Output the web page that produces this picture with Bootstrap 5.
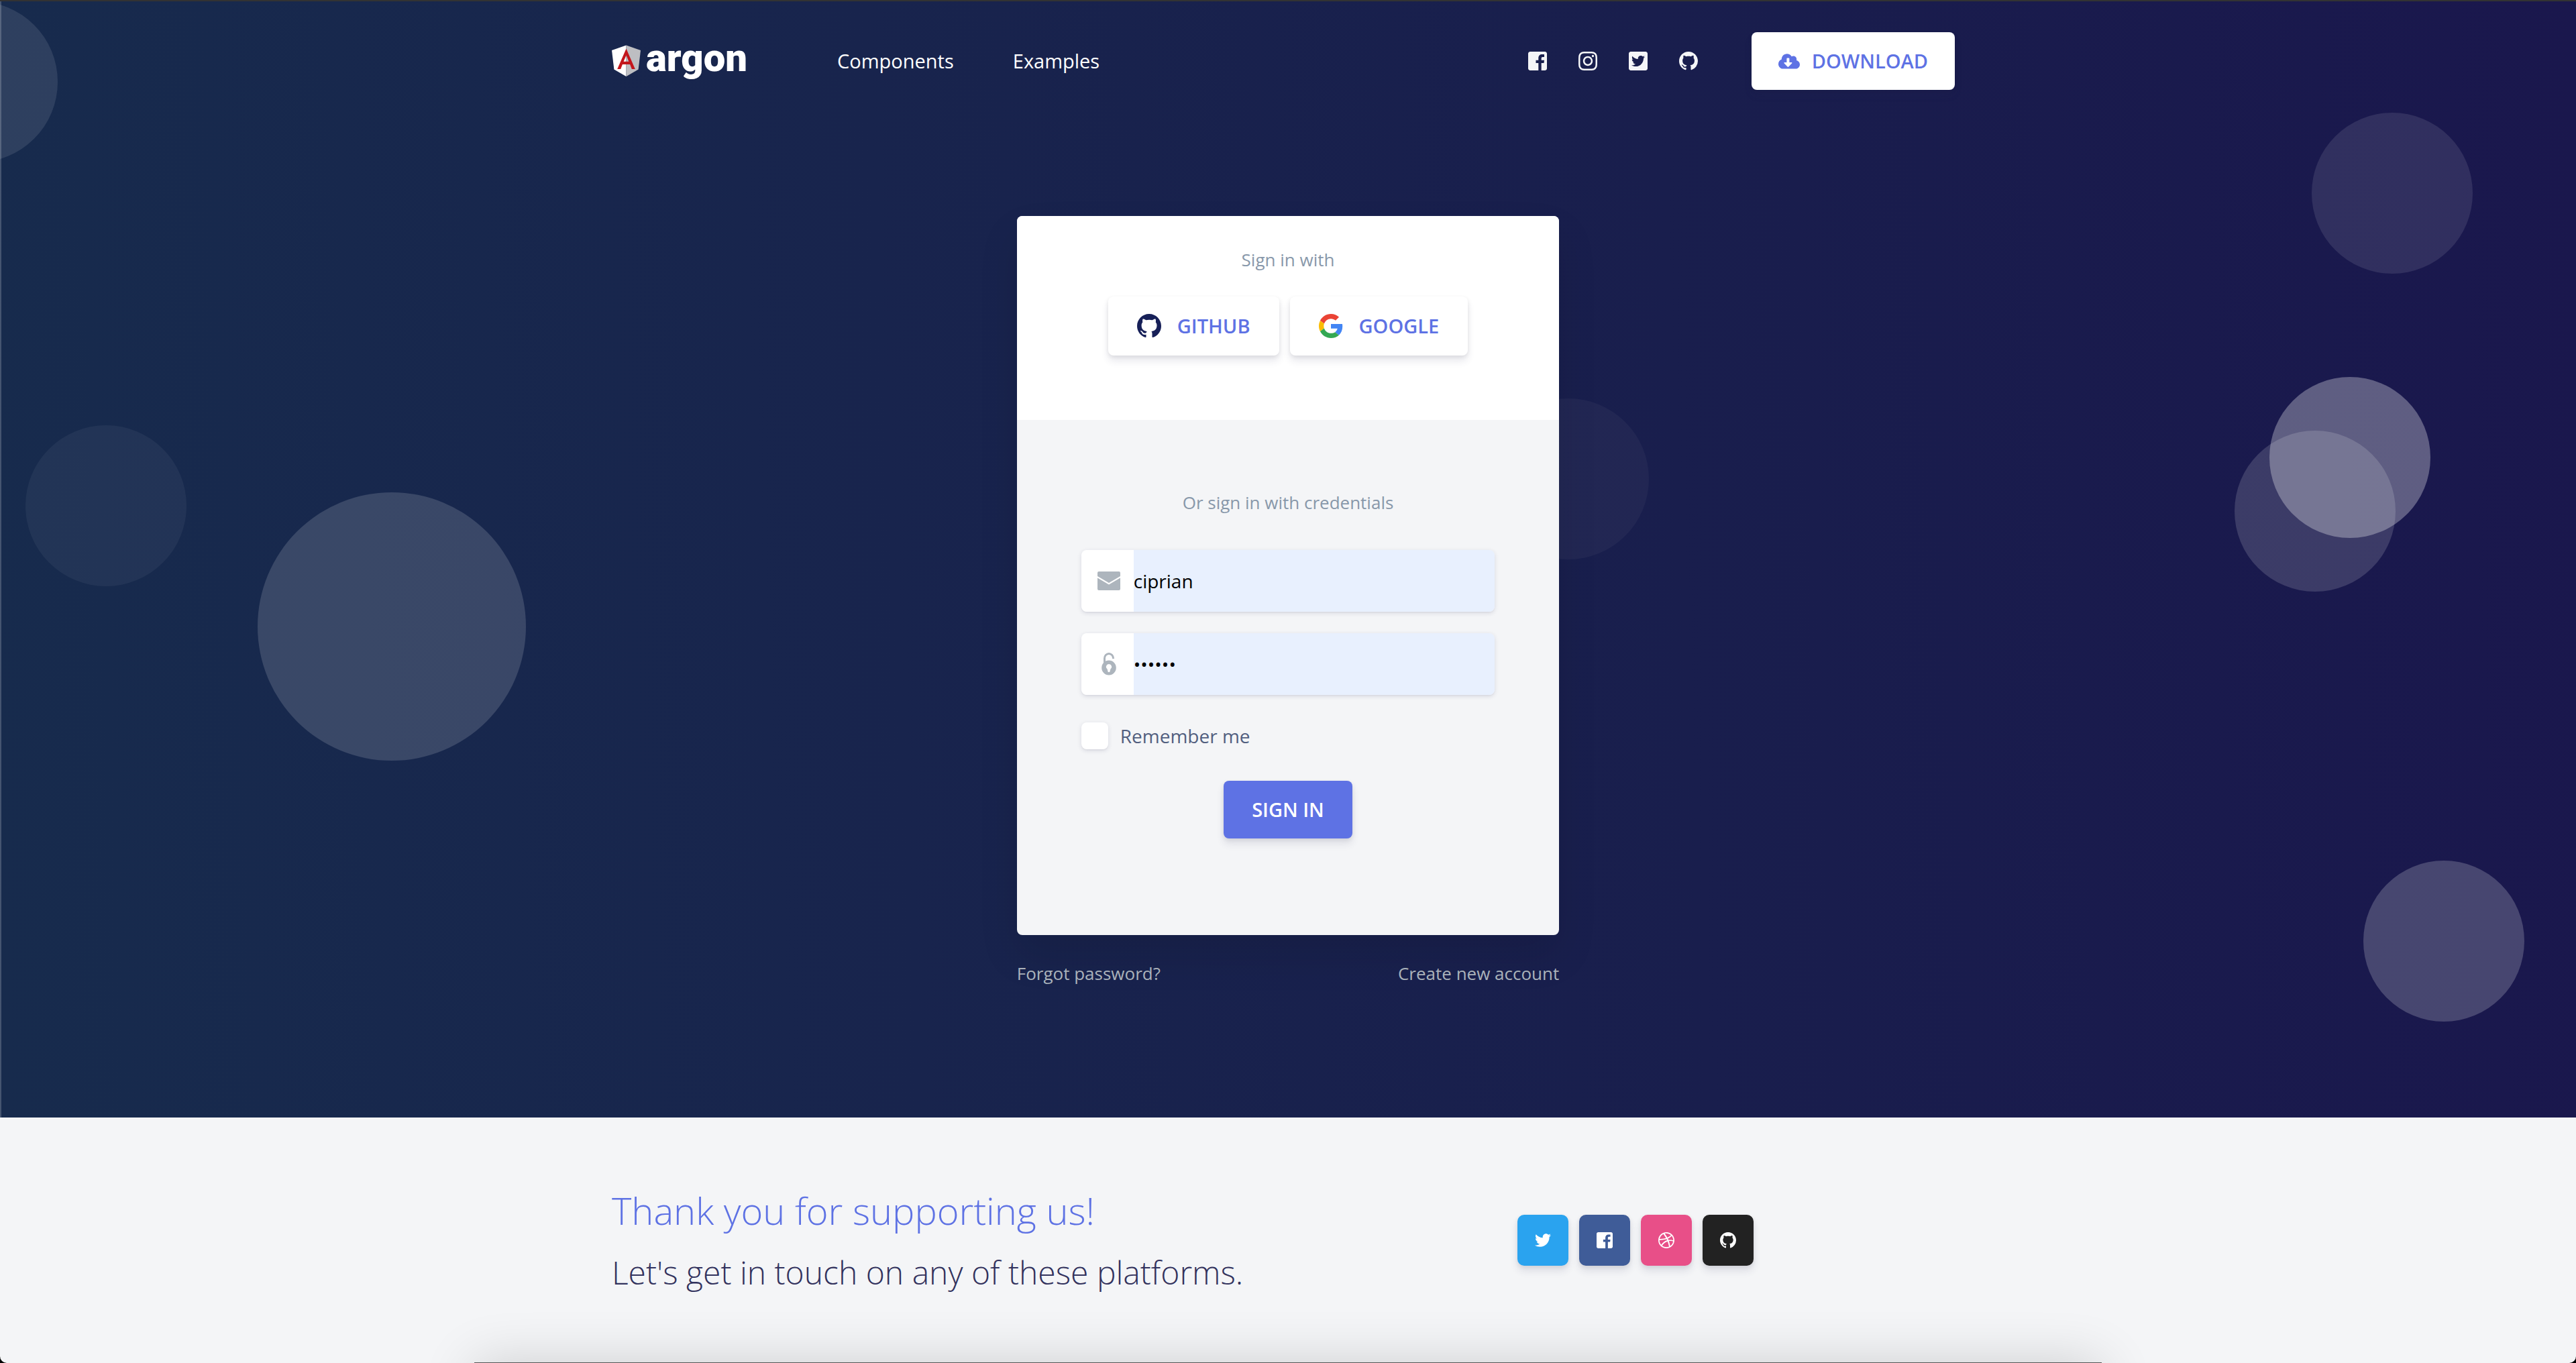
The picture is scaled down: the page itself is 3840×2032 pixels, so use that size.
<!DOCTYPE html>
<html lang="en">
<head>
<meta charset="utf-8">
<meta name="viewport" content="width=device-width, initial-scale=1">
<title>Argon – Sign in</title>
<link href="https://cdn.jsdelivr.net/npm/bootstrap@5.3.0/dist/css/bootstrap.min.css" rel="stylesheet">
<style>
  :root {
    --argon-primary: #5e72e4;
    --argon-muted: #8898aa;
    --argon-light: #f4f5f7;
    --btn-shadow: 0 8px 12px rgba(50, 50, 93, .11), 0 2px 6px rgba(0, 0, 0, .08);
    --field-shadow: 0 2px 6px rgba(50, 50, 93, .15), 0 2px 0 rgba(0, 0, 0, .02);
  }
  body { background: #000; font-family: "Open Sans", sans-serif; font-size: 28px; line-height: 42px; color: #525f7f; }
  svg { display: block; fill: currentColor; flex: none; }
  .page-shell { min-height: 100vh; background: var(--argon-light); border-top: 2px solid #333; border-radius: 0 0 10px 10px; }
  .container { --bs-gutter-x: 54px; max-width: 2070px; }
  .row { --bs-gutter-x: 54px; }

  .hero { background: linear-gradient(87deg, #172b4d 0, #1a174d 100%); box-shadow: inset 2px 0 rgba(255, 255, 255, .2); padding-bottom: 196px; }
  .bubble { position: absolute; width: 240px; height: 240px; border-radius: 50%; background: rgba(255, 255, 255, .1); }
  .bubble-1 { left: -4%; top: 0; }
  .bubble-2 { right: 4%; top: 10%; }
  .bubble-3 { right: 5.66%; top: 560px; background: rgba(255, 255, 255, .3); }
  .bubble-4 { right: 7%; top: 640px; background: rgba(255, 255, 255, .15); }
  .bubble-5 { left: 1%; top: 38%; background: rgba(255, 255, 255, .05); }
  .bubble-6 { left: 10%; top: 44%; width: 400px; height: 400px; background: rgba(255, 255, 255, .15); }
  .bubble-7 { right: 36%; top: 592px; background: rgba(255, 255, 255, .04); }
  .bubble-8 { right: 2%; top: 77%; background: rgba(255, 255, 255, .2); }

  .site-nav { padding: 46px 0 48px; }
  .site-nav .nav-link { font-size: 29px; padding: 0; color: #fff; }
  .site-nav .menu-links { gap: 88px; margin-left: 130px; }
  .social-links { gap: 47px; margin-right: 80px; color: var(--argon-light); }
  .social-links a { color: inherit; }
  .btn-argon { font-size: 29px; font-weight: 600; line-height: 42px; padding: 22px 42px; border: 0; border-radius: 8px; text-transform: uppercase; box-shadow: var(--btn-shadow); }
  .btn-white, .btn-white:hover { background: #fff; color: var(--argon-primary); }
  .btn-violet, .btn-violet:hover { background: var(--argon-primary); color: #fff; }
  .btn-fetch { gap: 18px; padding: 22px 40px; margin-right: 14px; }
  .btn-brand { gap: 24px; padding: 23px 43px; }

  .login-area { padding-top: 140px; }
  .login-card { background: var(--argon-light); border: 0; border-radius: 8px; box-shadow: 0 30px 60px rgba(0, 0, 0, .1); }
  .login-card .card-header { background: #fff; border: 0; border-radius: 8px 8px 0 0; padding: 46px 54px 96px; }
  .login-card .card-body { padding: 104px 96px 144px; }
  .brand-buttons { margin-top: 36px; }
  .caption { font-size: 26px; line-height: 38px; color: var(--argon-muted); }
  .field { border-radius: 8px; overflow: hidden; height: 92px; margin-top: 32px; box-shadow: var(--field-shadow); }
  .caption + .field { margin-top: 52px; }
  .field .input-group-text { width: 79px; background: #fff; border: 0; color: #adb5bd; padding: 0 0 0 24px; }
  .field .form-control { font-size: 28px; color: #000; background: #e8f0fe; border: 0; padding: 0; }
  .remember { gap: 18px; margin: 40px 0 46px; }
  .remember .form-check-input { width: 40px; height: 40px; margin: 0; border: 0; border-radius: 8px; background-color: #fff; box-shadow: var(--field-shadow); }
  .under-links { margin-top: 38px; font-size: 26px; line-height: 38px; }
  .under-links a { color: #adb5bd; }

  .site-footer { padding: 102px 0 98px; }
  .site-footer h2 { font-size: 56px; font-weight: 300; line-height: 73px; color: var(--argon-primary); margin-bottom: 20px; }
  .site-footer h3 { font-size: 48px; font-weight: 300; line-height: 72px; color: #32325d; }
  .btn-social { width: 76px; height: 76px; border: 0; border-radius: 10px; color: #fff; box-shadow: var(--btn-shadow); }
  .btn-social:hover { color: #fff; }
  .bg-twitter { background: #2aa3ef !important; }
  .bg-facebook { background: #3f5c98 !important; }
  .bg-dribbble { background: #e84f88 !important; }
  .bg-github { background: #222 !important; }
  /* panel that peeks in from below the window edge */
  .bottom-panel { position: absolute; left: 18.4%; right: 18.4%; bottom: -160px; height: 161px; background: #555; box-shadow: 0 0 80px rgba(0, 0, 0, .16); }
</style>
</head>
<body>
<div class="page-shell position-relative overflow-hidden">
  <main class="hero position-relative overflow-hidden">
    <div aria-hidden="true">
      <span class="bubble bubble-1"></span><span class="bubble bubble-2"></span>
      <span class="bubble bubble-3"></span><span class="bubble bubble-4"></span>
      <span class="bubble bubble-5"></span><span class="bubble bubble-6"></span>
      <span class="bubble bubble-7"></span><span class="bubble bubble-8"></span>
    </div>

    <nav class="site-nav position-relative">
      <div class="container d-flex align-items-center">
        <a class="d-block text-white" href="#" aria-label="Argon">
          <svg width="206" height="60" viewBox="0 0 206 60">
            <path fill="#fff" d="M21.500 6.500L0 14l3.400 28.500L21.500 53z"/>
            <path fill="#bdbec2" d="M21.500 6.500L43 14l-3.400 28.500L21.500 53z"/>
            <path fill="#c3161c" fill-rule="evenodd" d="M21.500 11.500L8.200 42h5l2.700-7h11.200l2.700 7h5zM21.500 21.500l3.900 9.300h-7.800z"/>
            <text x="51" y="45" font-family="Roboto, sans-serif" font-weight="900" font-size="58">argon</text>
          </svg>
        </a>
        <div class="menu-links d-flex">
          <a class="nav-link" href="#">Components</a>
          <a class="nav-link" href="#">Examples</a>
        </div>
        <div class="social-links d-flex ms-auto">
          <a href="#" aria-label="Facebook"><svg width="28" height="28" viewBox="0 32 448 448"><use href="#i-facebook"/></svg></a>
          <a href="#" aria-label="Instagram"><svg width="28" height="28" viewBox="0 32 448 448"><path d="M224.100 141c-63.600 0-114.900 51.300-114.900 114.900s51.300 114.900 114.900 114.900S339 319.500 339 255.900 287.700 141 224.100 141zm0 189.600c-41.100 0-74.700-33.500-74.700-74.700s33.500-74.700 74.700-74.700 74.700 33.500 74.700 74.700-33.600 74.700-74.700 74.700zm146.400-194.300c0 14.900-12 26.800-26.800 26.800-14.900 0-26.800-12-26.800-26.800s12-26.800 26.800-26.800 26.800 12 26.800 26.800zm76.100 27.200c-1.700-35.900-9.900-67.700-36.200-93.900-26.200-26.200-58-34.400-93.900-36.200-37-2.100-147.900-2.100-184.900 0-35.800 1.700-67.600 9.900-93.900 36.100s-34.400 58-36.200 93.900c-2.100 37-2.100 147.900 0 184.900 1.700 35.900 9.900 67.700 36.200 93.900s58 34.400 93.900 36.200c37 2.100 147.900 2.100 184.900 0 35.900-1.700 67.700-9.900 93.900-36.200 26.200-26.200 34.400-58 36.200-93.900 2.100-37 2.100-147.800 0-184.800zM398.800 388c-7.800 19.600-22.900 34.700-42.600 42.600-29.500 11.700-99.500 9-132.100 9s-102.700 2.600-132.100-9c-19.600-7.800-34.700-22.900-42.600-42.600-11.700-29.500-9-99.500-9-132.100s-2.600-102.700 9-132.100c7.800-19.600 22.900-34.700 42.600-42.600 29.500-11.700 99.500-9 132.100-9s102.700-2.600 132.100 9c19.600 7.800 34.700 22.900 42.600 42.600 11.700 29.500 9 99.500 9 132.100s2.700 102.700-9 132.100z"/></svg></a>
          <a href="#" aria-label="Twitter"><svg width="28" height="28" viewBox="0 32 448 448"><path d="M400 32H48C21.500 32 0 53.500 0 80v352c0 26.500 21.500 48 48 48h352c26.500 0 48-21.500 48-48V80c0-26.500-21.500-48-48-48zm-48.900 158.800c.2 2.800.2 5.700.2 8.500 0 86.700-66 186.600-186.600 186.600-37.200 0-71.700-10.800-100.700-29.400 5.300.6 10.400.8 15.800.8 30.700 0 58.900-10.400 81.400-28-28.800-.6-53-19.500-61.300-45.500 10.100 1.500 19.200 1.500 29.600-1.200-30-6.100-52.500-32.500-52.500-64.400v-.8c8.700 4.900 18.900 7.900 29.600 8.300a65.447 65.447 0 0 1-29.200-54.600c0-12.200 3.200-23.400 8.900-33.100 32.300 39.800 80.800 65.800 135.200 68.600-9.300-44.500 24-80.600 64-80.600 18.900 0 35.900 7.900 47.900 20.700 14.800-2.800 29-8.300 41.600-15.800-4.900 15.200-15.200 28-28.800 36.100 13.200-1.400 26-5.100 37.800-10.200-8.900 13.100-20.100 24.700-32.900 34z"/></svg></a>
          <a href="#" aria-label="GitHub"><svg width="28" height="28" viewBox="0 0 16 16"><use href="#i-github"/></svg></a>
        </div>
        <a class="btn btn-argon btn-white btn-fetch d-flex align-items-center" href="#">
          <svg width="32" height="24" viewBox="0 8 640 480"><path d="M537.600 226.600c4.100-10.700 6.400-22.400 6.400-34.600 0-53-43-96-96-96-19.700 0-38.100 6-53.300 16.200C367 64.200 315.300 32 256 32c-88.400 0-160 71.600-160 160 0 2.700.1 5.400.2 8.100C40.200 219.800 0 273.200 0 336c0 79.500 64.500 144 144 144h368c70.700 0 128-57.300 128-128 0-61.900-44-113.600-102.400-125.400zm-132.900 88.700L299.300 420.700c-6.200 6.200-16.400 6.200-22.600 0L171.300 315.300c-10.100-10.100-2.900-27.300 11.300-27.300H248V176c0-8.800 7.200-16 16-16h48c8.800 0 16 7.200 16 16v112h65.400c14.200 0 21.400 17.200 11.300 27.300z"/></svg>
          <span>Download</span>
        </a>
      </div>
    </nav>

    <section class="login-area container position-relative">
      <div class="row justify-content-center">
        <div class="col-5">
          <div class="card login-card">
            <div class="card-header text-center">
              <div class="caption">Sign in with</div>
              <div class="brand-buttons d-flex justify-content-center gap-3">
                <button type="button" class="btn btn-argon btn-white btn-brand d-flex align-items-center">
                  <svg width="36" height="36" viewBox="0 0 16 16" color="#172058"><use href="#i-github"/></svg><span>Github</span>
                </button>
                <button type="button" class="btn btn-argon btn-white btn-brand d-flex align-items-center">
                  <svg width="36" height="36" viewBox="0 0 48 48">
                    <path fill="#ea4335" d="M24 9.500c3.540 0 6.710 1.220 9.210 3.600l6.850-6.850C35.900 2.380 30.470 0 24 0 14.620 0 6.510 5.380 2.560 13.220l7.980 6.190C12.430 13.720 17.740 9.500 24 9.500z"/>
                    <path fill="#4285f4" d="M46.980 24.550c0-1.570-.15-3.090-.38-4.550H24v9.020h12.940c-.58 2.960-2.260 5.480-4.780 7.180l7.730 6c4.510-4.180 7.090-10.360 7.090-17.650z"/>
                    <path fill="#fbbc05" d="M10.530 28.590c-.48-1.450-.76-2.990-.76-4.590s.27-3.140.76-4.590l-7.980-6.190C.92 16.460 0 20.120 0 24c0 3.880.92 7.540 2.560 10.780l7.970-6.190z"/>
                    <path fill="#34a853" d="M24 48c6.480 0 11.930-2.130 15.890-5.810l-7.730-6c-2.150 1.450-4.920 2.300-8.160 2.300-6.260 0-11.570-4.220-13.470-9.910l-7.980 6.190C6.510 42.620 14.620 48 24 48z"/>
                  </svg><span>Google</span>
                </button>
              </div>
            </div>
            <form class="card-body">
              <div class="caption text-center">Or sign in with credentials</div>
              <div class="field input-group flex-nowrap">
                <label class="input-group-text" for="user" aria-label="Email"><svg width="34" height="28" viewBox="0 0 34 28"><path d="M2 0h30q2 0 2 2v5L17 17 0 7V2q0-2 2-2zM0 9.500l17 10 17-10V26q0 2-2 2H2q-2 0-2-2z"/></svg></label>
                <input class="form-control" id="user" type="text" value="ciprian">
              </div>
              <div class="field input-group flex-nowrap">
                <label class="input-group-text" for="pass" aria-label="Password"><svg width="34" height="34" viewBox="0 0 34 34"><path fill-rule="evenodd" d="M17 11.500a10.800 11 0 1 1 0 22 10.800 11 0 0 1 0-22zM17 17a4 4 0 0 0-2.500 7.200l1.300 4.800h2.400l1.300-4.800A4 4 0 0 0 17 17z"/><path fill="none" stroke="currentColor" stroke-width="3" d="M10.500 15V8.500a6.500 7 0 0 1 13 0V9"/></svg></label>
                <input class="form-control" id="pass" type="password" value="argon1">
              </div>
              <div class="remember d-flex align-items-center">
                <input class="form-check-input" id="remember" type="checkbox">
                <label for="remember">Remember me</label>
              </div>
              <div class="d-flex justify-content-center">
                <button type="button" class="btn btn-argon btn-violet">Sign in</button>
              </div>
            </form>
          </div>
          <div class="under-links d-flex justify-content-between">
            <a class="text-decoration-none" href="#">Forgot password?</a>
            <a class="text-decoration-none" href="#">Create new account</a>
          </div>
        </div>
      </div>
    </section>
  </main>

  <footer class="site-footer">
    <div class="container">
      <div class="row align-items-center">
        <div class="col-6">
          <h2>Thank you for supporting us!</h2>
          <h3 class="mb-0">Let's get in touch on any of these platforms.</h3>
        </div>
        <div class="col-6 d-flex justify-content-center gap-3 mb-1">
          <button type="button" class="btn btn-social bg-twitter d-flex align-items-center justify-content-center p-0" aria-label="Twitter"><svg width="24" height="24" viewBox="0 0 512 512"><path d="M459.370 151.716c.325 4.548.325 9.097.325 13.645 0 138.720-105.583 298.558-298.558 298.558-59.452 0-114.680-17.219-161.137-47.106 8.447.974 16.568 1.299 25.340 1.299 49.055 0 94.213-16.568 130.274-44.832-46.132-.975-84.792-31.188-98.112-72.772 6.498.974 12.995 1.624 19.818 1.624 9.421 0 18.843-1.300 27.614-3.573-48.081-9.747-84.143-51.980-84.143-102.985v-1.299c13.969 7.797 30.214 12.670 47.431 13.319-28.264-18.843-46.781-51.005-46.781-87.391 0-19.492 5.197-37.360 14.294-52.954 51.655 63.675 129.300 105.258 216.365 109.807-1.624-7.797-2.599-15.918-2.599-24.040 0-57.828 46.782-104.934 104.934-104.934 30.213 0 57.502 12.670 76.670 33.137 23.715-4.548 46.456-13.320 66.599-25.340-7.798 24.366-24.366 44.833-46.132 57.827 21.117-2.273 41.584-8.122 60.426-16.243-14.292 20.791-32.161 39.308-52.628 54.253z"/></svg></button>
          <button type="button" class="btn btn-social bg-facebook d-flex align-items-center justify-content-center p-0" aria-label="Facebook"><svg width="24" height="24" viewBox="0 32 448 448"><path id="i-facebook" d="M448 80v352c0 26.500-21.500 48-48 48h-85.300V302.800h60.600l8.700-67.600h-69.300V192c0-19.600 5.400-32.900 33.500-32.900H384V98.700c-6.200-.8-27.400-2.700-52.200-2.700-51.600 0-87 31.500-87 89.400v49.900H184v67.600h60.900V480H48c-26.500 0-48-21.500-48-48V80c0-26.500 21.500-48 48-48h352c26.500 0 48 21.500 48 48z"/></svg></button>
          <button type="button" class="btn btn-social bg-dribbble d-flex align-items-center justify-content-center p-0" aria-label="Dribbble"><svg width="24" height="24" viewBox="8 8 496 496"><path d="M256 8C119.252 8 8 119.252 8 256s111.252 248 248 248 248-111.252 248-248S392.748 8 256 8zm163.970 114.366c29.503 36.046 47.369 81.957 47.835 131.955-6.984-1.477-77.018-15.682-147.502-6.818-5.752-14.041-11.181-26.393-18.617-41.614 78.321-31.977 113.818-77.482 118.284-83.523zM396.421 97.870c-3.810 5.427-35.697 48.286-111.021 76.519-34.712-63.776-73.185-116.168-79.040-124.008 67.176-16.193 137.966 1.270 190.061 47.489zm-230.480-33.250c5.585 7.659 43.438 60.116 78.537 122.509-99.087 26.313-186.360 25.934-195.834 25.809C62.380 147.205 106.678 92.573 165.941 64.620zM44.170 256.323c0-2.166.043-4.322.108-6.473 9.268.19 111.920 1.513 217.706-30.146 6.064 11.868 11.857 23.915 17.174 35.949-76.599 21.575-146.194 83.527-180.531 142.306C64.794 360.405 44.170 310.730 44.170 256.323zm81.807 167.113c22.127-45.233 82.178-103.622 167.579-132.756 29.740 77.283 42.039 142.053 45.189 160.638-68.112 29.013-150.015 21.053-212.768-27.882zm248.380 8.489c-2.171-12.886-13.446-74.897-41.152-151.033 66.380-10.626 124.700 6.768 131.947 9.055-9.442 58.941-43.273 109.844-90.795 141.978z"/></svg></button>
          <button type="button" class="btn btn-social bg-github d-flex align-items-center justify-content-center p-0" aria-label="GitHub"><svg width="24" height="24" viewBox="0 0 16 16"><path id="i-github" d="M8 0C3.580 0 0 3.580 0 8c0 3.540 2.290 6.530 5.470 7.590.4.07.55-.17.55-.38 0-.19-.01-.82-.01-1.490-2.010.37-2.530-.49-2.690-.94-.09-.23-.48-.94-.82-1.130-.28-.15-.68-.52-.01-.53.63-.01 1.080.58 1.230.82.72 1.210 1.870.87 2.330.66.07-.52.28-.87.51-1.070-1.780-.2-3.640-.89-3.640-3.950 0-.87.31-1.590.82-2.150-.08-.2-.36-1.020.08-2.120 0 0 .67-.21 2.200.82.64-.18 1.320-.27 2-.27s1.360.09 2 .27c1.530-1.040 2.200-.82 2.200-.82.44 1.100.16 1.920.08 2.120.51.56.82 1.270.82 2.150 0 3.070-1.870 3.750-3.650 3.950.29.25.54.73.54 1.480 0 1.070-.01 1.930-.01 2.200 0 .21.15.46.55.38A8.010 8.010 0 0 0 16 8c0-4.420-3.580-8-8-8z"/></svg></button>
        </div>
      </div>
    </div>
  </footer>
  <div class="bottom-panel" aria-hidden="true"></div>
</div>
<script src="https://cdn.jsdelivr.net/npm/bootstrap@5.3.0/dist/js/bootstrap.bundle.min.js"></script>
</body>
</html>
